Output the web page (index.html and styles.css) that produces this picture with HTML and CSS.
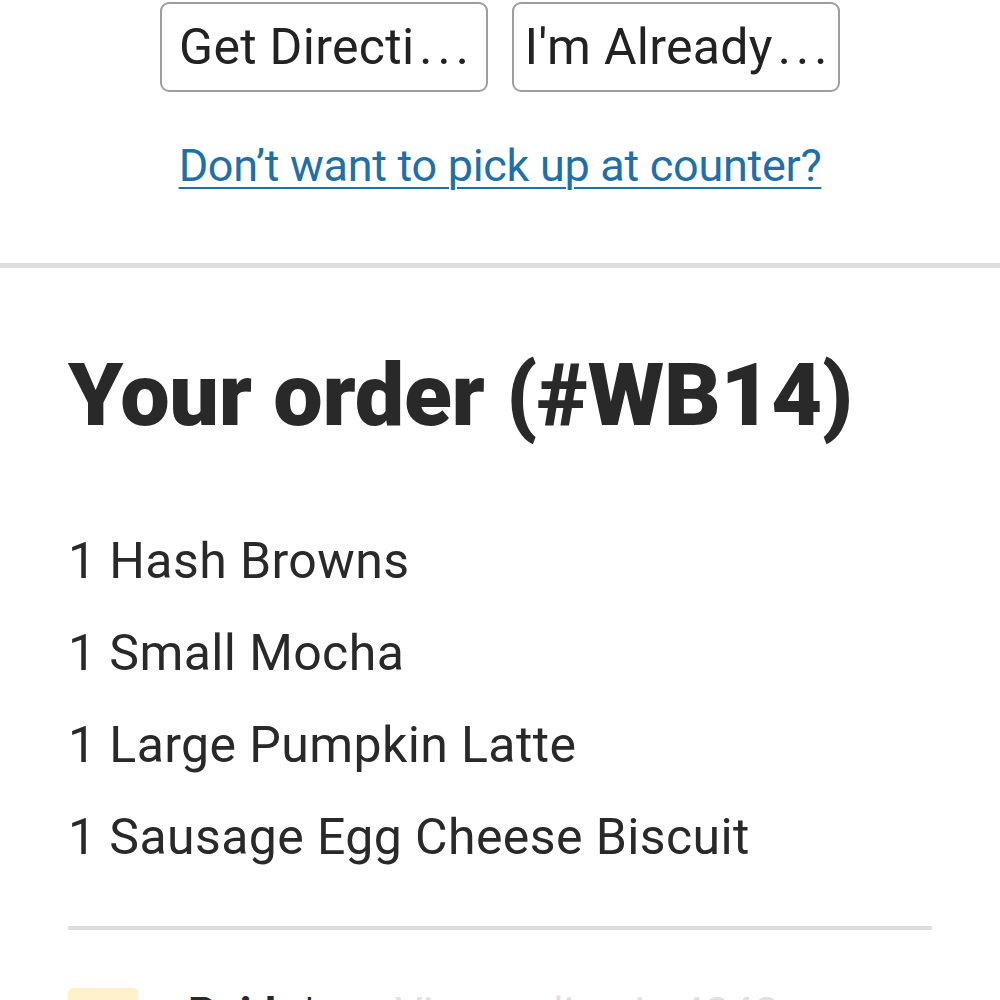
FILE: index.html
```html
<!DOCTYPE html>
<html>
<head>
<meta charset="utf-8">
<link rel="stylesheet" href="styles.css">
</head>
<body>
<div class="top">
  <div class="btn-row">
    <button class="btn"><span class="btn-label">Get Directi</span><span class="dots">...</span></button>
    <button class="btn"><span class="btn-label">I'm Already</span><span class="dots">...</span></button>
  </div>
  <a class="link" href="#">Don’t want to pick up at counter?</a>
</div>
<div class="section-rule"></div>
<div class="order">
  <h1 class="title">Your order (#WB14)</h1>
  <ul class="items">
    <li>1 Hash Browns</li>
    <li>1 Small Mocha</li>
    <li>1 Large Pumpkin Latte</li>
    <li>1 Sausage Egg Cheese Biscuit</li>
  </ul>
  <div class="rule"></div>
  <div class="paid-row">
    <span class="card-icon"></span>
    <span class="paid">Paid</span>
    <span class="sep">|</span>
    <span class="paid-sub">Visa ending in 4242</span>
  </div>
</div>
</body>
</html>
```

FILE: styles.css
```css
html, body {
  margin: 0;
  padding: 0;
  background: #ffffff;
  height: 1000px;
  overflow: hidden;
}
body {
  font-family: Roboto, "Liberation Sans", sans-serif;
  color: #292929;
}
.top {
  display: flex;
  flex-direction: column;
  align-items: center;
  padding-top: 2px;
}
.btn-row {
  display: flex;
  gap: 24px;
}
.btn {
  width: 328px;
  height: 90px;
  box-sizing: border-box;
  border: 2px solid #9e9e9e;
  border-radius: 9px;
  background: #fff;
  font-family: Roboto, "Liberation Sans", sans-serif;
  font-size: 50px;
  color: #222;
  padding: 0 8px;
  display: flex;
  align-items: center;
  justify-content: center;
  white-space: nowrap;
}
.btn-label {
  letter-spacing: 0.3px;
}
.dots {
  letter-spacing: 5px;
  margin-left: 5px;
  margin-right: -5px;
}
.link {
  margin-top: 48px;
  font-size: 45px;
  color: #1f6fa8;
  text-decoration: underline;
  text-decoration-thickness: 2px;
  text-underline-offset: 6px;
  letter-spacing: -0.3px;
  line-height: 52px;
}
.section-rule {
  margin-top: 71px;
  height: 5px;
  background: #dddddd;
}
.order {
  padding: 0 68px;
}
.title {
  margin: 77px 0 0 0;
  font-family: Roboto, "Liberation Sans", sans-serif;
  font-weight: 900;
  font-size: 88px;
  line-height: 100px;
  letter-spacing: -0.3px;
  color: #292929;
}
.items {
  list-style: none;
  margin: 70px 0 0 0;
  padding: 0;
}
.items li {
  font-size: 50px;
  line-height: 92px;
  letter-spacing: 0.4px;
}
.rule {
  margin-top: 43px;
  height: 4px;
  background: #dddddd;
}
.paid-row {
  margin-top: 54px;
  display: flex;
  align-items: flex-start;
  gap: 20px;
  font-size: 44px;
  line-height: 60px;
}
.card-icon {
  width: 70px;
  height: 44px;
  margin-top: 4px;
  background: #ffc72c;
  border-radius: 5px;
  opacity: 0.25;
}
.paid {
  font-weight: 700;
  margin-left: 30px;
}
.sep {
  color: #292929;
  margin-left: 8px;
}
.paid-sub {
  color: #9a9a9a;
  opacity: 0.3;
  margin-left: 60px;
}
```
